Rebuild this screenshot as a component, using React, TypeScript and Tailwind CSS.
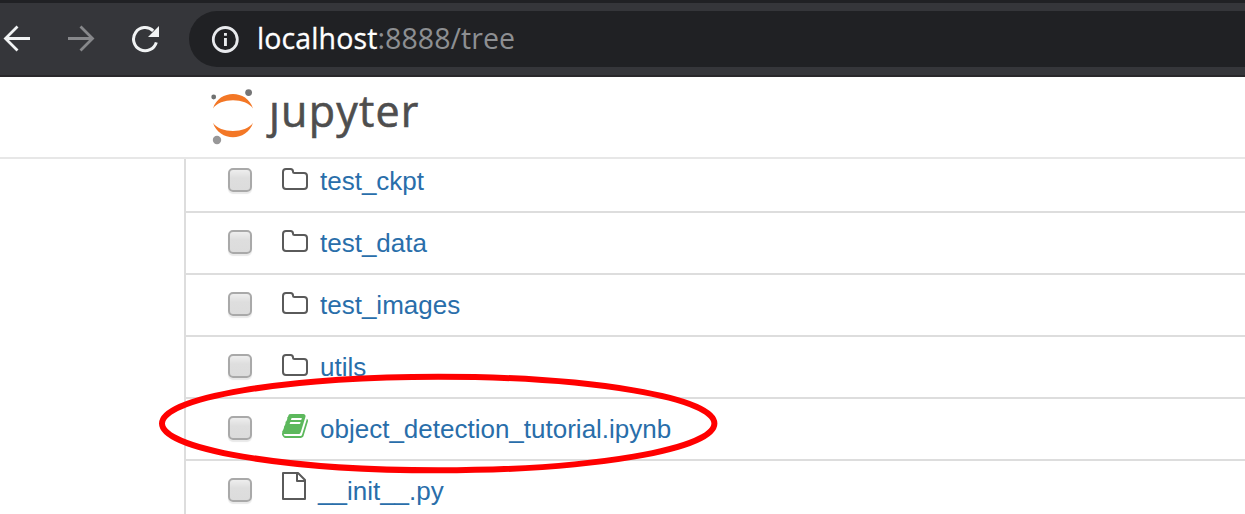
type Kind = "folder" | "notebook" | "file";

const entries: { name: string; kind: Kind }[] = [
  { name: "test_ckpt", kind: "folder" },
  { name: "test_data", kind: "folder" },
  { name: "test_images", kind: "folder" },
  { name: "utils", kind: "folder" },
  { name: "object_detection_tutorial.ipynb", kind: "notebook" },
  { name: "__init__.py", kind: "file" },
];

function FolderIcon() {
  return (
    <svg className="mr-[12px] mt-[17px] h-[22px] w-[26px]" viewBox="0 0 26 22" fill="none" stroke="#5a5a5a" strokeWidth="2">
      <path d="M1 4Q1 1 4 1H8.500Q11 1 11 3.500Q11 5 12.500 5H22Q25 5 25 8V18Q25 21 22 21H4Q1 21 1 18Z" />
    </svg>
  );
}

function FileIcon() {
  return (
    <svg className="mr-[12px] mt-[11px] h-7 w-6" viewBox="0 0 24 28" fill="none" stroke="#5a5a5a" strokeWidth="2" strokeLinejoin="round">
      <path d="M1 1H16L23 8V27H1Z" />
      <path d="M15 1V9H23" />
    </svg>
  );
}

function BookIcon() {
  return (
    <svg className="mr-[12px] mt-[15px] h-6 w-[26px]" viewBox="64 128 1664 1536" fill="#5cb85c">
      <path d="M1703 478q40 57 18 129l-275 906q-19 64-76.500 107.500t-122.500 43.500h-923q-77 0-148.500-53.500t-99.500-131.500q-24-67-2-127 0-4 3-27t4-37q1-8-3-21.500t-3-19.500q2-11 8-21t16.500-23.500 16.500-23.500q23-38 45-91.500t30-91.500q3-10 .5-30t-.5-28q3-11 17-28t17-23q21-36 42-92t25-90q1-9-2.500-32t.5-28q4-13 22-30.500t22-22.500q19-26 42.500-84.500t27.500-96.500q1-8-3-25.500t-2-26.500q2-8 9-18t18-23 17-21q8-12 16.500-30.500t15-35 16-36 19.500-32 26.500-23.500 36-11.500 47.500 5.500l-1 3q38-9 51-9h761q74 0 114 56t18 130l-274 906q-36 119-71.500 153.500t-128.500 34.500h-869q-27 0-38 15-11 16-1 43 24 70 144 70h923q29 0 56-15.500t35-41.500l300-987q7-22 5-57 38 15 59 43zm-1064 2q-4 13 2 22.500t20 9.500h608q13 0 25.500-9.500t16.500-22.500l21-64q4-13-2-22.500t-20-9.500h-608q-13 0-25.500 9.500t-16.500 22.500zm-83 256q-4 13 2 22.500t20 9.500h608q13 0 25.500-9.500t16.500-22.500l21-64q4-13-2-22.500t-20-9.500h-608q-13 0-25.500 9.500t-16.500 22.500z" />
    </svg>
  );
}

function EntryIcon({ kind }: { kind: Kind }) {
  if (kind === "folder") return <FolderIcon />;
  if (kind === "notebook") return <BookIcon />;
  return <FileIcon />;
}

function Entry({ name, kind }: { name: string; kind: Kind }) {
  return (
    <li className="flex h-[62px] shrink-0 items-start border-b-2 border-[#dddddd] pl-[42px]">
      <span
        role="checkbox"
        aria-checked="false"
        aria-label={name}
        className="mr-[30px] mt-[17px] h-6 w-6 rounded-[5px] border-2 border-[#a9a9a9] bg-linear-to-b from-[#eeeeee] via-[#dedede] via-40% to-[#dcdcdc] shadow-[0_2px_1px_#e9e9e9]"
      />
      <EntryIcon kind={kind} />
      <a className="mt-[12px] whitespace-nowrap text-[26px] leading-9 text-[#296eaa]">{name}</a>
    </li>
  );
}

function BrowserBar() {
  return (
    <div className="flex h-[77px] items-start border-b-2 border-t-[3px] border-b-[#29282b] border-t-[#202124] bg-[#35363a] pt-2">
      <svg className="ml-[3px] mt-[14px] h-7 w-7 shrink-0" viewBox="0 0 28 28" fill="none" stroke="#f1f3f4" strokeWidth="2.800">
        <path d="M27 13.500H3M14.500 1.500L2.500 13.500L14.500 25.500" />
      </svg>
      <svg className="ml-[36px] mt-[14px] h-7 w-7 shrink-0" viewBox="0 0 28 28" fill="none" stroke="#87888b" strokeWidth="2.800">
        <path d="M1 13.500H25M13.500 1.500L25.500 13.500L13.500 25.500" />
      </svg>
      <svg className="ml-[36px] mt-[14px] h-7 w-7 shrink-0" viewBox="0 0 28 28">
        <path d="M25.300 17.300A11.600 11.600 0 1 1 22.200 5.800" fill="none" stroke="#f1f3f4" strokeWidth="3" />
        <path d="M28 1V12H17Z" fill="#f1f3f4" />
      </svg>
      <div className="ml-[30px] flex h-14 flex-1 items-center rounded-l-full bg-[#202124] pl-[22px]">
        <svg className="h-7 w-7 shrink-0" viewBox="0 0 28 28">
          <circle cx="14.300" cy="14.500" r="12" fill="none" stroke="#e8eaed" strokeWidth="2.800" />
          <path d="M13 8h2.900v2.800H13zM13 13h2.900v8H13z" fill="#e8eaed" />
        </svg>
        <span className="mb-[2px] ml-[18px] whitespace-nowrap font-['Open_Sans','Noto_Sans',sans-serif] text-[28.500px] leading-none tracking-[0.080px] text-[#8d8f92]">
          <span className="tracking-[0.120px] text-white [-webkit-text-stroke:0.300px_#ffffff]">localhost</span>:8888/tree
        </span>
      </div>
    </div>
  );
}

function JupyterHeader() {
  return (
    <header className="flex h-[82px] items-start border-b-2 border-[#e7e7e7] bg-white pl-[210px]">
      <svg className="mt-[11px] h-[58px] w-[46px] shrink-0" viewBox="210 88 46 58">
        <path d="M213 108.500C219 89.200 247 89.200 253 108.500C246 97.500 220 97.500 213 108.500Z" fill="#f37726" />
        <path d="M213 122.800C219 142 247 142 253 122.800C246 133.800 220 133.800 213 122.800Z" fill="#f37726" />
        <circle cx="213.700" cy="97" r="2.400" fill="#6f7070" />
        <circle cx="248.600" cy="92.600" r="3.400" fill="#767677" />
        <circle cx="217" cy="140" r="4.200" fill="#989798" />
      </svg>
      <span
        aria-label="jupyter"
        className="ml-[13px] mt-[4px] font-['Open_Sans','Noto_Sans',sans-serif] text-[43px] leading-[60px] tracking-[1.200px] text-[#4e4e4e] [-webkit-text-stroke:0.600px_#4e4e4e]"
      >
        ȷupyter
      </span>
    </header>
  );
}

export default function App() {
  return (
    <div className="relative flex h-[514px] w-[1245px] flex-col overflow-hidden bg-white font-['Liberation_Sans',Arial,sans-serif]">
      <BrowserBar />
      <JupyterHeader />
      <main className="ml-[184px] flex min-h-0 flex-1 flex-col overflow-hidden border-l-2 border-[#dddddd]">
        <ul className="-mt-2 flex flex-col">
          {entries.map((entry) => (
            <Entry key={entry.name} name={entry.name} kind={entry.kind} />
          ))}
        </ul>
      </main>
      <svg className="pointer-events-none absolute left-0 top-0 h-[514px] w-[1245px]" viewBox="0 0 1245 514">
        <ellipse cx="438.200" cy="423.500" rx="276.200" ry="46.800" fill="none" stroke="#ff0000" strokeWidth="6" />
      </svg>
    </div>
  );
}
